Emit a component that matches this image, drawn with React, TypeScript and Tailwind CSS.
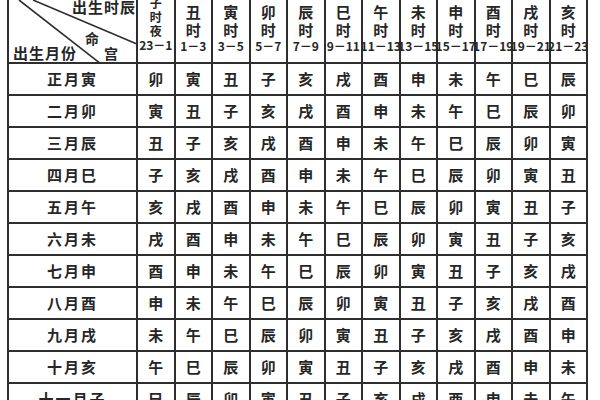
const BRANCHES = ["子", "丑", "寅", "卯", "辰", "巳", "午", "未", "申", "酉", "戌", "亥"];
const MONTHS = ["正月寅", "二月卯", "三月辰", "四月巳", "五月午", "六月未", "七月申", "八月酉", "九月戌", "十月亥", "十一月子", "十二月丑"];
const RANGES = ["23－1", "1－3", "3－5", "5－7", "7－9", "9－11", "11－13", "13－15", "15－17", "17－19", "19－21", "21－23"];

function cellBranch(row: number, col: number) {
  return BRANCHES[(((3 - row - col) % 12) + 12) % 12];
}

function CornerCell() {
  return (
    <div className="relative h-[64px] border-r-2 border-b-2 border-[#2e2e2e] overflow-hidden">
      <svg className="absolute inset-0" width="130" height="64" viewBox="0 0 130 64">
        <line x1="24" y1="0" x2="130" y2="45" stroke="#2e2e2e" strokeWidth="1.6" />
        <line x1="10" y1="0" x2="92" y2="64" stroke="#2e2e2e" strokeWidth="1.6" />
      </svg>
      <span className="absolute left-[63px] top-[-2px] whitespace-nowrap text-[15px] leading-[18px] font-semibold tracking-[1px]">出生时辰</span>
      <span className="absolute left-[76px] top-[30px] text-[14px] leading-[16px] font-semibold">命</span>
      <span className="absolute left-[95px] top-[45px] text-[14px] leading-[16px] font-semibold">宫</span>
      <span className="absolute left-[4px] top-[44px] whitespace-nowrap text-[15px] leading-[18px] font-semibold tracking-[1px]">出生月份</span>
    </div>
  );
}

function HourHeader({ index }: { index: number }) {
  const first = index === 0;
  return (
    <div className="h-[64px] border-r-2 border-b-2 border-[#2e2e2e] flex flex-col items-center">
      {first ? (
        <div className="-mt-[4px] flex flex-col items-center text-[12px] leading-[14px] font-semibold">
          <span>子</span>
          <span>时</span>
          <span>夜</span>
        </div>
      ) : (
        <div className="mt-[3px] flex flex-col items-center text-[15px] leading-[18px] font-semibold">
          <span>{BRANCHES[index]}</span>
          <span>时</span>
        </div>
      )}
      <span className="whitespace-nowrap text-[12px] leading-[14px] font-semibold">{RANGES[index]}</span>
    </div>
  );
}

export default function App() {
  return (
    <div
      className="w-[600px] h-[400px] overflow-hidden bg-white text-[#262626]"
      style={{ fontFamily: '"Noto Sans CJK SC", "Noto Sans", sans-serif' }}
    >
      <div className="ml-[7px] w-[581px] border-l-2 border-[#2e2e2e] grid grid-cols-[129px_repeat(12,37.5px)]">
        <CornerCell />
        {BRANCHES.map((_, i) => (
          <HourHeader key={i} index={i} />
        ))}
        {MONTHS.map((month, r) => (
          <>
            <div
              key={"m" + r}
              className="h-[32px] border-r-2 border-b-2 border-[#2e2e2e] flex items-center justify-center text-[15px] font-semibold tracking-[2px]"
            >
              {month}
            </div>
            {BRANCHES.map((_, c) => (
              <div
                key={r + "-" + c}
                className="h-[32px] border-r-2 border-b-2 border-[#2e2e2e] flex items-center justify-center text-[15px] font-semibold"
              >
                {cellBranch(r, c)}
              </div>
            ))}
          </>
        ))}
      </div>
    </div>
  );
}
